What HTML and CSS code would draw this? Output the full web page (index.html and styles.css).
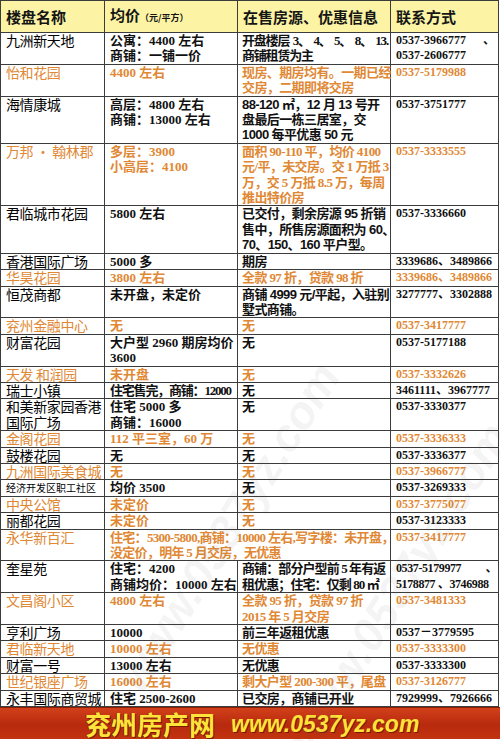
FILE: index.html
```html
<!DOCTYPE html>
<html lang="zh-CN">
<head>
<meta charset="utf-8">
<title>兖州楼盘均价表</title>
<link rel="stylesheet" href="styles.css">
</head>
<body>
<div class="page">
  <table class="price">
    <colgroup>
      <col class="c1"><col class="c2"><col class="c3"><col class="c4">
    </colgroup>
    <thead>
      <tr>
        <th>楼盘名称</th>
        <th>均价<small>（元/平方）</small></th>
        <th>在售房源、优惠信息</th>
        <th>联系方式</th>
      </tr>
    </thead>
    <tbody>
      <tr><td>九洲新天地</td><td>公寓：4400 左右<br>商铺：一铺一价</td><td class="info tight"><span class="spread"><span>开盘楼层</span><span>3、</span><span>4、</span><span>5、</span><span>8、</span><span>13.</span></span>商铺租赁为主</td><td class="tel"><span class="spread">0537-3966777<span>、</span></span>0537-2606777</td></tr>
      <tr class="o"><td>怡和花园</td><td>4400 左右</td><td class="info">现房、期房均有。一期已经<br>交房，二期即将交房</td><td class="tel">0537-5179988</td></tr>
      <tr><td>海情康城</td><td>高层：4800 左右<br>商铺：13000 左右</td><td class="info sans">88-120 ㎡，12 月 13 号开<br>盘最后一栋三居室，交<br>1000 每平优惠 50 元</td><td class="tel">0537-3751777</td></tr>
      <tr class="o"><td>万邦 · 翰林郡</td><td>多层：3900<br>小高层：4100</td><td class="info">面积 90-110 平，均价 4100<br>元/平，未交房。交 1 万抵 3<br>万，交 5 万抵 8.5 万，每周<br>推出特价房</td><td class="tel">0537-3333555</td></tr>
      <tr><td>君临城市花园</td><td>5800 左右</td><td class="info sans">已交付，剩余房源 95 折销<br>售中，所售房源面积为 60、<br>70、150、160 平户型。</td><td class="tel">0537-3336660</td></tr>
      <tr><td>香港国际广场</td><td>5000 多</td><td class="info">期房</td><td class="tel">3339686、3489866</td></tr>
      <tr class="o"><td>华昊花园</td><td>3800 左右</td><td class="info">全款 97 折，贷款 98 折</td><td class="tel">3339686、3489866</td></tr>
      <tr><td>恒茂商都</td><td>未开盘，未定价</td><td class="info sans">商铺 4999 元/平起，入驻别<br>墅式商铺。</td><td class="tel">3277777、3302888</td></tr>
      <tr class="o"><td>兖州金融中心</td><td>无</td><td class="info">无</td><td class="tel">0537-3417777</td></tr>
      <tr><td>财富花园</td><td>大户型 2960 期房均价<br>3600</td><td class="info">无</td><td class="tel">0537-5177188</td></tr>
      <tr class="o"><td>天发 和润园</td><td>未开盘</td><td class="info">无</td><td class="tel">0537-3332626</td></tr>
      <tr><td>瑞士小镇</td><td class="tight">住宅售完，商铺：12000</td><td class="info">无</td><td class="tel">3461111、3967777</td></tr>
      <tr><td>和美新家园香港<br>国际广场</td><td>住宅 5000 多<br>商铺：16000</td><td class="info">无</td><td class="tel">0537-3330377</td></tr>
      <tr class="o"><td>金阁花园</td><td>112 平三室，60 万</td><td class="info">无</td><td class="tel">0537-3336333</td></tr>
      <tr><td>鼓楼花园</td><td>无</td><td class="info">无</td><td class="tel">0537-3336377</td></tr>
      <tr class="o"><td>九洲国际美食城</td><td>无</td><td class="info">无</td><td class="tel">0537-3966777</td></tr>
      <tr><td class="small">经济开发区职工社区</td><td>均价 3500</td><td class="info">无</td><td class="tel">0537-3269333</td></tr>
      <tr class="o"><td>中央公馆</td><td>未定价</td><td class="info">无</td><td class="tel">0537-3775077</td></tr>
      <tr><td>丽都花园</td><td class="or">未定价</td><td class="info or">无</td><td class="tel">0537-3123333</td></tr>
      <tr class="o"><td>永华新百汇</td><td colspan="2" class="wide">住宅：5300-5800,商铺：10000 左右,写字楼：未开盘，<br>没定价，明年 5 月交房，无优惠</td><td class="tel">0537-3417777</td></tr>
      <tr><td>奎星苑</td><td>住宅：4200<br>商铺均价：10000 左右</td><td class="info snug">商铺：部分户型前 5 年有返<br>租优惠；住宅：仅剩 80 ㎡</td><td class="tel telsnug"><span class="spread">0537-5179977<span>、</span></span>5178877 、3746988</td></tr>
      <tr class="o"><td>文昌阁小区</td><td>4800 左右</td><td class="info">全款 95 折，贷款 97 折<br>2015 年 5 月交房</td><td class="tel">0537-3481333</td></tr>
      <tr><td>亨利广场</td><td>10000</td><td class="info">前三年返租优惠</td><td class="tel">0537－3779595</td></tr>
      <tr class="o"><td>君临新天地</td><td>10000 左右</td><td class="info">无优惠</td><td class="tel">0537-3333300</td></tr>
      <tr><td>财富一号</td><td>13000 左右</td><td class="info">无优惠</td><td class="tel">0537-3333300</td></tr>
      <tr class="o"><td>世纪银座广场</td><td>16000 左右</td><td class="info">剩大户型 200-300 平，尾盘</td><td class="tel">0537-3126777</td></tr>
      <tr><td>永丰国际商贸城</td><td>住宅 2500-2600</td><td class="info">已交房，商铺已开业</td><td class="tel">7929999、7926666</td></tr>
    </tbody>
  </table>
  <div class="banner">
    <span class="brand">兖州房产网</span>
    <span class="url">www.0537yz.com</span>
  </div>
  <div class="mark m1">www.0537yz.com</div>
  <div class="mark m2">www.0537yz.com</div>
</div>
</body>
</html>
```
FILE: styles.css
```css
html, body {
  margin: 0;
  padding: 0;
  background: #ffffff;
}

.page {
  position: relative;
  width: 500px;
  height: 741px;
  overflow: hidden;
  background: #ffffff;
}

.price {
  width: 498px;
  border-collapse: collapse;
  table-layout: fixed;
  font-family: "Liberation Serif", "Noto Sans CJK SC", serif;
  font-size: 13px;
  font-weight: bold;
  color: #111111;
}

.c1 { width: 104px; }
.c2 { width: 133px; }
.c3 { width: 153px; }
.c4 { width: 108px; }

.price th,
.price td {
  border: 1px solid #3c3c3c;
  padding: 0 3px 0 5px;
  vertical-align: top;
  text-align: left;
  line-height: 15.4px;
  white-space: nowrap;
}

.price th {
  height: 31px;
  vertical-align: middle;
  background: #fcf4a4;
  font-family: "Noto Sans CJK SC", sans-serif;
  font-size: 15px;
  font-weight: bold;
  color: #151515;
  line-height: 18px;
}

.price th small {
  font-size: 9px;
  font-weight: bold;
}

.price td:first-child {
  font-family: "Noto Sans CJK SC", sans-serif;
  font-weight: normal;
  font-size: 14px;
  letter-spacing: -0.4px;
  color: #000000;
}

.price td.small {
  font-size: 10px;
  letter-spacing: 0;
}

.price td.info {
  padding-left: 4px;
  padding-right: 2px;
  letter-spacing: -0.6px;
}

.price td.snug {
  letter-spacing: -0.9px;
}

.price td.tight {
  letter-spacing: -1.2px;
}

.price td.wide {
  letter-spacing: -0.7px;
}

.price td.sans {
  font-family: "Liberation Sans", "Noto Sans CJK SC", sans-serif;
}

.price tr.o td,
.price tr.o td:first-child,
.price td.or {
  color: #e08834;
}

.price td.tel {
  font-size: 12px;
  letter-spacing: 0;
  padding-left: 5px;
  padding-right: 3px;
}

.price td.telsnug {
  letter-spacing: -0.4px;
  padding-right: 1px;
}

.spread {
  display: flex;
  justify-content: space-between;
}

.banner {
  display: flex;
  align-items: center;
  gap: 16px;
  height: 31px;
  padding-left: 85px;
  background: linear-gradient(180deg, #d2401a 0%, #b82a0e 55%, #c2330f 100%);
  border-top: 1px solid #8a1e08;
}

.brand {
  font-family: "Noto Sans CJK SC", sans-serif;
  font-weight: bold;
  font-size: 26px;
  line-height: 30px;
  color: #ffe33a;
  text-shadow: 1px 1px 0 #7a1a05, -1px 0 0 #7a1a05;
}

.url {
  font-family: "Liberation Sans", sans-serif;
  font-style: italic;
  font-weight: bold;
  font-size: 23px;
  line-height: 30px;
  color: #ffe33a;
  text-shadow: 1px 1px 0 #7a1a05;
}

.mark {
  position: absolute;
  font-family: "Liberation Sans", sans-serif;
  font-weight: bold;
  font-style: italic;
  color: rgba(90, 90, 90, 0.07);
  white-space: nowrap;
  transform: rotate(-58deg);
  pointer-events: none;
}

.m1 {
  left: 40px;
  top: 500px;
  font-size: 46px;
}

.m2 {
  left: 210px;
  top: 560px;
  font-size: 46px;
}
```
